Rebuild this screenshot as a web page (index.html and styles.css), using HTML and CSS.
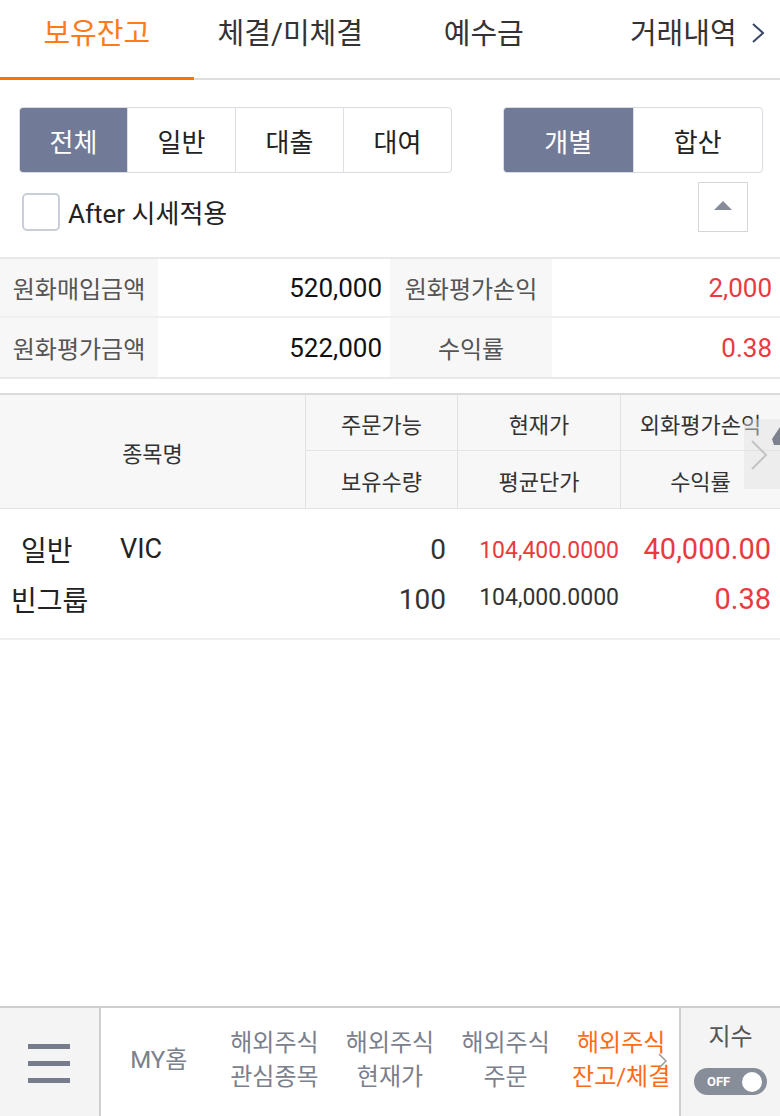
FILE: index.html
```html
<!DOCTYPE html>
<html>

	<head>
		<meta charset="UTF-8">
		<title>보유잔고</title>
		<link rel="stylesheet" href="styles.css">
	</head>

	<body>
		<div id="page">
			<div class="tabs">
				<div class="tab active">보유잔고</div>
				<div class="tab">체결/미체결</div>
				<div class="tab">예수금</div>
				<div class="tab last">거래내역</div>
				<svg class="tab-more" width="16" height="22" viewBox="0 0 16 22">
					<polyline points="3,2 13,11 3,20" fill="none" stroke="#3b4868" stroke-width="2" />
				</svg>
			</div>

			<div class="filters">
				<div class="seg seg4">
					<div class="seg-btn on">전체</div>
					<div class="seg-btn">일반</div>
					<div class="seg-btn">대출</div>
					<div class="seg-btn">대여</div>
				</div>
				<div class="seg seg2">
					<div class="seg-btn on">개별</div>
					<div class="seg-btn">합산</div>
				</div>
			</div>

			<div class="options">
				<label class="check"><span class="box"></span>After 시세적용</label>
				<div class="up-btn"><span class="tri"></span></div>
			</div>

			<div class="summary">
				<div class="s-label">원화매입금액</div>
				<div class="s-val">520,000</div>
				<div class="s-label">원화평가손익</div>
				<div class="s-val red">2,000</div>
				<div class="s-label">원화평가금액</div>
				<div class="s-val">522,000</div>
				<div class="s-label">수익률</div>
				<div class="s-val red">0.38</div>
			</div>

			<div class="holdings">
				<div class="h-head">
					<div class="hc name-col">종목명</div>
					<div class="hc c2 top">주문가능</div>
					<div class="hc c3 top">현재가</div>
					<div class="hc c4 top">외화평가손익</div>
					<div class="hc c2">보유수량</div>
					<div class="hc c3">평균단가</div>
					<div class="hc c4">수익률</div>
					<div class="scroll-hint">
						<svg width="36" height="70" viewBox="0 0 36 70">
							<polyline points="8,22 22,36 8,50" fill="none" stroke="#c4c4c4" stroke-width="2" />
							<polygon points="28,20 36,8 36,26 30,26" fill="#7c818d" />
						</svg>
					</div>
				</div>
				<div class="h-row">
					<div class="d-name">
						<div class="d-line"><span class="kind">일반</span><span class="code">VIC</span></div>
						<div class="d-line">빈그룹</div>
					</div>
					<div class="d-col q">
						<div class="d-line">0</div>
						<div class="d-line">100</div>
					</div>
					<div class="d-col p">
						<div class="d-line red">104,400.0000</div>
						<div class="d-line">104,000.0000</div>
					</div>
					<div class="d-col r">
						<div class="d-line red">40,000.00</div>
						<div class="d-line red">0.38</div>
					</div>
				</div>
			</div>

			<div class="bottom">
				<div class="menu">
					<svg width="42" height="42" viewBox="0 0 42 42">
						<rect x="0" y="3" width="42" height="5" fill="#767c8b" />
						<rect x="0" y="20" width="42" height="5" fill="#767c8b" />
						<rect x="0" y="37" width="42" height="5" fill="#767c8b" />
					</svg>
				</div>
				<div class="nav-items">
					<div class="nav">MY홈</div>
					<div class="nav">해외주식<br>관심종목</div>
					<div class="nav">해외주식<br>현재가</div>
					<div class="nav">해외주식<br>주문</div>
					<div class="nav cur">해외주식<br>잔고/체결</div>
					<svg class="nav-more" width="9" height="16" viewBox="0 0 9 16">
						<polyline points="1,1 8,8 1,15" fill="none" stroke="#9a9a9a" stroke-width="1.5" />
					</svg>
				</div>
				<div class="index">
					<div class="index-title">지수</div>
					<div class="toggle"><span class="off">OFF</span><span class="knob"></span></div>
				</div>
			</div>
		</div>
	</body>

</html>
```

FILE: styles.css
```css
* {
	margin: 0;
	padding: 0;
	box-sizing: border-box;
}

body {
	font-family: Roboto, "Noto Sans CJK KR", sans-serif;
	color: #222;
	background: #fff;
}

#page {
	width: 780px;
	min-height: 1116px;
	display: flex;
	flex-direction: column;
}

.red {
	color: #ea3a3f;
}

/* 상단 탭 */
.tabs {
	display: flex;
	position: relative;
	border-bottom: 2px solid #dedede;
}

.tab {
	flex: 1;
	height: 80px;
	margin-bottom: -2px;
	padding-bottom: 16px;
	border-bottom: 3px solid transparent;
	display: flex;
	align-items: center;
	justify-content: center;
	font-size: 29px;
	color: #333;
}

.tab.active {
	color: #ff7a1a;
	border-bottom-color: #ff7300;
}

.tab.last {
	padding-left: 6px;
}

.tab-more {
	position: absolute;
	right: 14px;
	top: 22px;
}

/* 구분 버튼 */
.filters {
	display: flex;
	justify-content: space-between;
	margin-top: 27px;
	padding: 0 17px 0 19px;
}

.seg {
	display: flex;
	height: 66px;
	border: 1px solid #d9dce3;
	border-radius: 4px;
	overflow: hidden;
}

.seg4 {
	width: 433px;
}

.seg2 {
	width: 260px;
}

.seg-btn {
	flex: 1;
	display: flex;
	align-items: center;
	justify-content: center;
	border-left: 1px solid #dcdfe5;
	font-size: 26px;
	color: #222;
}

.seg-btn:first-child {
	border-left: none;
}

.seg-btn.on {
	background: #717b97;
	color: #fff;
}

.options {
	display: flex;
	justify-content: space-between;
	align-items: center;
	margin-top: 8px;
	padding: 0 32px 0 22px;
	height: 51px;
}

.check {
	display: flex;
	align-items: center;
	font-size: 26px;
	color: #222;
	margin-top: 10px;
}

.check .box {
	width: 38px;
	height: 38px;
	border: 2px solid #c9ced9;
	border-radius: 5px;
	margin-right: 8px;
}

.up-btn {
	width: 50px;
	height: 50px;
	border: 1px solid #d6d6d6;
	display: flex;
	align-items: center;
	justify-content: center;
}

.up-btn .tri {
	width: 0;
	height: 0;
	border-left: 9px solid transparent;
	border-right: 9px solid transparent;
	border-bottom: 9px solid #868c99;
	margin-top: -2px;
}

/* 원화 요약 */
.summary {
	display: grid;
	grid-template-columns: 158px 232px 162px 1fr;
	margin-top: 25px;
	border-top: 2px solid #e8e8e8;
	border-bottom: 2px solid #e8e8e8;
}

.summary > div {
	height: 59px;
	display: flex;
	align-items: center;
}

.summary > div:nth-child(-n+4) {
	border-bottom: 2px solid #efefef;
}

.s-label {
	background: #f7f7f7;
	justify-content: center;
	font-size: 24px;
	color: #555;
}

.s-val {
	justify-content: flex-end;
	padding-right: 8px;
	font-size: 26px;
	color: #111;
}

.s-val.red {
	color: #ea3a3f;
}

/* 보유 종목 */
.holdings {
	margin-top: 14px;
	border-top: 2px solid #dadada;
}

.h-head {
	position: relative;
	display: grid;
	grid-template-columns: 305px 152px 163px 1fr;
	grid-template-rows: 56px 57px;
	background: #f7f7f7;
	border-bottom: 1px solid #e2e2e2;
}

.hc {
	display: flex;
	align-items: center;
	justify-content: center;
	font-size: 22px;
	color: #333;
	border-left: 1px solid #e2e2e2;
}

.hc.top {
	border-bottom: 1px solid #e4e4e4;
}

.name-col {
	grid-row: 1 / 3;
	border-left: none;
}

.scroll-hint {
	position: absolute;
	right: 0;
	top: 24px;
	width: 36px;
	height: 70px;
	background: rgba(225, 225, 225, 0.45);
}

.scroll-hint svg {
	display: block;
}

.h-row {
	display: grid;
	grid-template-columns: 305px 152px 163px 1fr;
	height: 131px;
	padding-top: 15px;
	border-bottom: 2px solid #eeeeee;
}

.d-line {
	height: 50px;
	display: flex;
	align-items: center;
}

.d-name {
	font-size: 28px;
	color: #222;
	padding-left: 11px;
}

.d-name .kind {
	margin-left: 10px;
	width: 99px;
}

.d-name .code {
	font-size: 27px;
}

.d-col .d-line {
	justify-content: flex-end;
}

.d-col.q {
	font-size: 28px;
	color: #333;
	padding-right: 11px;
}

.d-col.p {
	font-size: 23px;
	color: #333;
	padding-right: 1px;
}

.d-col.p .d-line.red {
	padding-top: 6px;
	color: #ea3a3f;
}

.d-col.p .d-line {
	padding-bottom: 4px;
}

.d-col.r {
	font-size: 29px;
	padding-right: 9px;
}

/* 하단 메뉴 */
.bottom {
	margin-top: auto;
	display: flex;
	height: 110px;
	border-top: 2px solid #cfcfcf;
}

.menu {
	width: 101px;
	background: #f4f4f4;
	border-right: 2px solid #cfcfcf;
	display: flex;
	align-items: center;
	justify-content: center;
	padding-right: 2px;
}

.nav-items {
	flex: 1;
	display: flex;
	position: relative;
}

.nav {
	flex: 1;
	display: flex;
	align-items: center;
	justify-content: center;
	text-align: center;
	font-size: 24px;
	line-height: 34px;
	color: #7b808d;
	padding-bottom: 4px;
	white-space: nowrap;
}

.nav.cur {
	color: #ff6b17;
}

.nav-more {
	position: absolute;
	right: 12px;
	top: 45px;
}

.index {
	width: 101px;
	background: #f4f4f4;
	border-left: 2px solid #cfcfcf;
	display: flex;
	flex-direction: column;
	align-items: center;
}

.index-title {
	margin-top: 13px;
	font-size: 24px;
	line-height: 32px;
	color: #555;
}

.toggle {
	margin-top: 15px;
	width: 73px;
	height: 27px;
	border-radius: 14px;
	background: #878d99;
	display: flex;
	align-items: center;
	justify-content: space-between;
	padding: 0 5px 0 13px;
}

.toggle .off {
	font-size: 13px;
	font-weight: bold;
	color: #fff;
}

.toggle .knob {
	width: 20px;
	height: 20px;
	border-radius: 50%;
	background: #fff;
}
```
